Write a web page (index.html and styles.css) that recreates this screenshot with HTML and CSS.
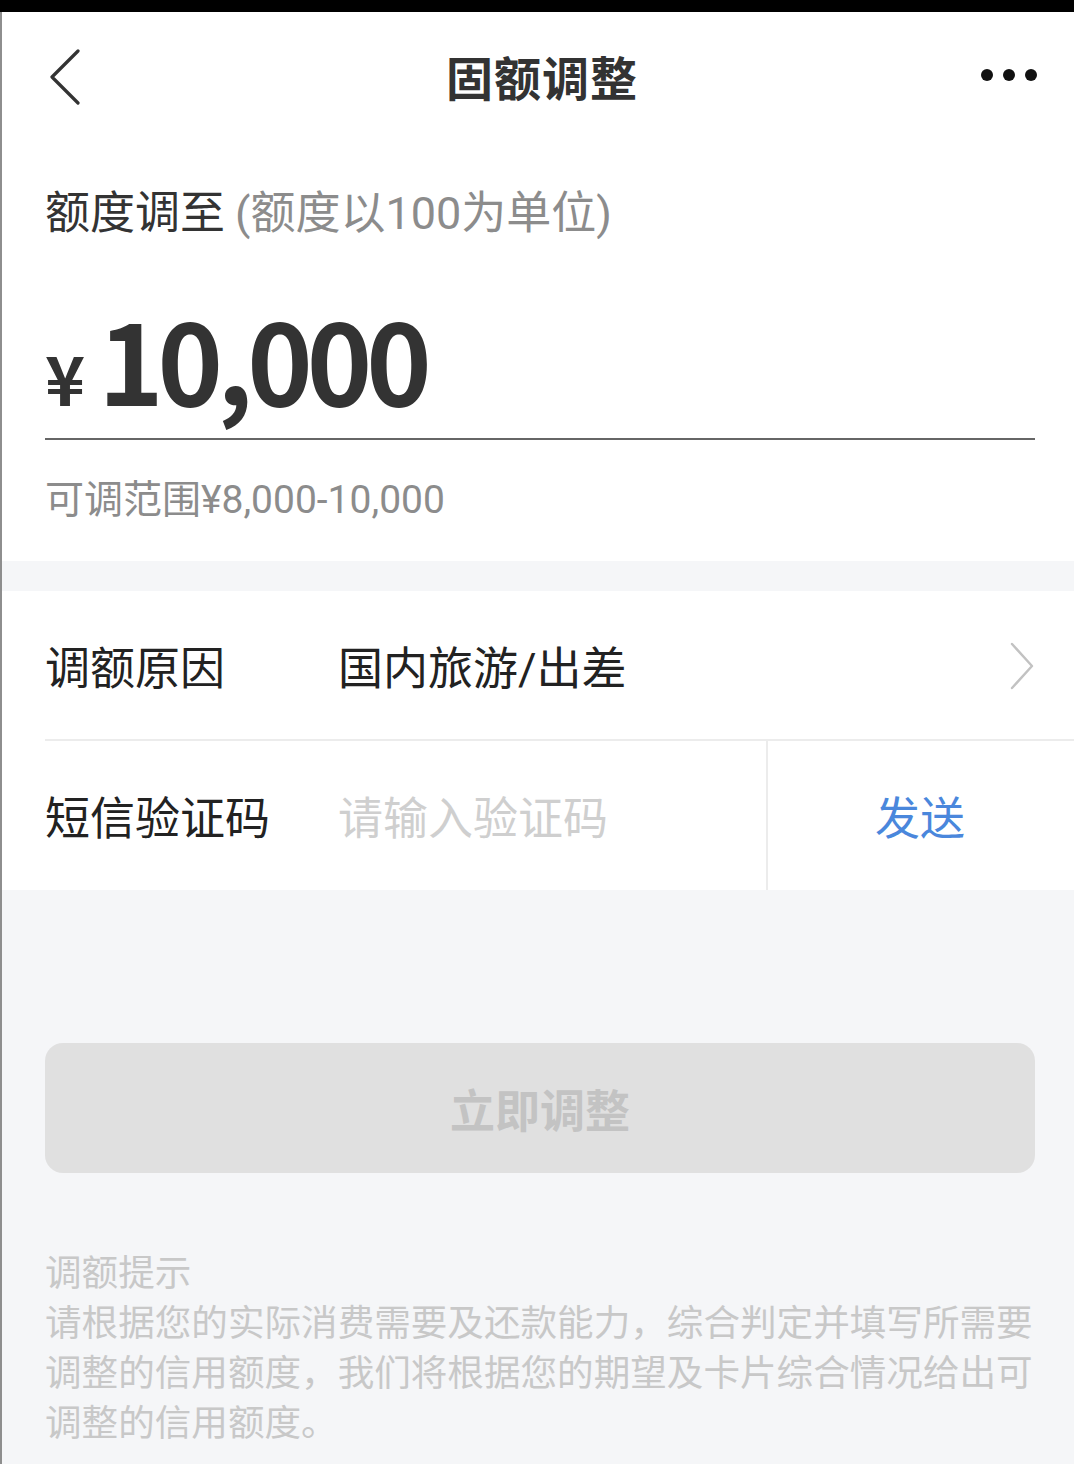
FILE: index.html
```html
<!DOCTYPE html>
<html lang="zh-CN">
<head>
    <meta charset="UTF-8">
    <meta name="viewport" content="width=device-width, initial-scale=1.0">
    <title>固额调整</title>
    <link rel="stylesheet" href="styles.css">
</head>
<body>
    <div class="status-bar"></div>

    <div class="page">
        <header class="nav">
            <a href="#" class="nav-back">
                <svg width="36" height="56" viewBox="0 0 36 56"><path d="M32 2 L6 28 L32 54" fill="none" stroke="#333" stroke-width="3.2" stroke-linecap="round" stroke-linejoin="round"/></svg>
            </a>
            <h1 class="nav-title">固额调整</h1>
            <a href="#" class="nav-more">
                <svg width="58" height="14" viewBox="0 0 58 14"><circle cx="7" cy="7" r="6" fill="#111"/><circle cx="29" cy="7" r="6" fill="#111"/><circle cx="51" cy="7" r="6" fill="#111"/></svg>
            </a>
        </header>

        <section class="amount-card">
            <div class="amount-label">额度调至 <span class="hint">(额度以100为单位)</span></div>
            <div class="amount-row">
                <span class="currency">¥</span>
                <span class="amount-value">10,000</span>
            </div>
            <div class="amount-range">可调范围¥8,000-10,000</div>
        </section>

        <section class="form-list">
            <div class="form-row">
                <label class="form-label">调额原因</label>
                <div class="form-value">国内旅游/出差</div>
                <svg class="arrow" width="26" height="48" viewBox="0 0 26 48"><path d="M3 2 L23 24 L3 46" fill="none" stroke="#c2c2c2" stroke-width="2.4" stroke-linecap="round" stroke-linejoin="round"/></svg>
            </div>
            <div class="form-row code-row">
                <label class="form-label">短信验证码</label>
                <input class="code-input" type="text" placeholder="请输入验证码">
                <button class="send-btn">发送</button>
            </div>
        </section>

        <div class="actions">
            <button class="btn-submit" disabled>立即调整</button>
        </div>

        <div class="tips">
            <p class="tips-title">调额提示</p>
            <p>请根据您的实际消费需要及还款能力，综合判定并填写所需要调整的信用额度，我们将根据您的期望及卡片综合情况给出可调整的信用额度。</p>
        </div>
    </div>
</body>
</html>
```

FILE: styles.css
```css
:root {
    --text-color: #333;
    --muted-color: #8c8c8c;
    --light-color: #c8c8c8;
    --page-bg: #f5f6f8;
    --line-color: #ececec;
    --blue: #4a87dc;
}

* {
    margin: 0;
    padding: 0;
    box-sizing: border-box;
    font-family: Roboto, 'Noto Sans CJK SC', sans-serif;
}

body {
    background-color: var(--page-bg);
    color: var(--text-color);
    width: 1074px;
    min-height: 1464px;
}

.status-bar {
    height: 12px;
    background-color: #000;
}

.page {
    border-left: 2px solid #8e8e8e;
    min-height: 1452px;
}

/* nav */
.nav {
    height: 128px;
    display: flex;
    align-items: center;
    justify-content: space-between;
    padding: 0 36px 0 44px;
    background-color: #fff;
}

.nav-back,
.nav-more {
    display: flex;
    width: 60px;
}

.nav-back svg {
    margin-top: 2px;
}

.nav-more {
    justify-content: flex-end;
    margin-top: -2px;
}

.nav-title {
    font-family: 'Noto Sans CJK SC', sans-serif;
    font-size: 47px;
    font-weight: 700;
    color: #333;
    letter-spacing: 1px;
    margin-top: -2px;
}

/* amount */
.amount-card {
    background-color: #fff;
    padding: 40px 39px 35px 43px;
}

.amount-label {
    font-family: 'Noto Sans CJK SC', sans-serif;
    font-size: 45px;
    line-height: 60px;
    color: #333;
}

.amount-label .hint {
    color: var(--muted-color);
}

.amount-row {
    display: flex;
    align-items: baseline;
    gap: 13px;
    margin-top: 58px;
    padding-bottom: 25px;
    border-bottom: 2px solid #666;
}

.currency {
    font-family: 'Noto Sans CJK SC', sans-serif;
    font-size: 68px;
    font-weight: 700;
    line-height: 1;
}

.amount-value {
    font-family: 'Noto Sans CJK SC', sans-serif;
    font-size: 111px;
    font-weight: 700;
    line-height: 1;
    letter-spacing: -6px;
}

.amount-range {
    margin-top: 34px;
    font-size: 39px;
    line-height: 52px;
    color: var(--muted-color);
}

/* form */
.form-list {
    margin-top: 30px;
    background-color: #fff;
    padding-left: 43px;
}

.form-row {
    display: flex;
    align-items: center;
    height: 150px;
    font-family: 'Noto Sans CJK SC', sans-serif;
    font-size: 45px;
}

.form-row:first-child {
    border-bottom: 2px solid var(--line-color);
    padding-right: 39px;
}

.form-label {
    width: 293px;
    flex-shrink: 0;
    color: #222;
}

.form-value {
    flex: 1;
    color: #222;
}

.arrow {
    margin-top: 2px;
}

.code-row {
    height: 149px;
}

.code-input {
    flex: 1;
    min-width: 0;
    height: 100%;
    border: none;
    outline: none;
    font-family: 'Noto Sans CJK SC', sans-serif;
    font-size: 45px;
    color: #222;
    background: transparent;
}

.code-input::placeholder {
    color: #cfcfcf;
}

.send-btn {
    width: 308px;
    flex-shrink: 0;
    height: 100%;
    border: none;
    border-left: 2px solid var(--line-color);
    background: transparent;
    font-family: 'Noto Sans CJK SC', sans-serif;
    font-size: 45px;
    color: var(--blue);
    padding-right: 2px;
    cursor: pointer;
}

/* button */
.actions {
    padding: 153px 39px 0 43px;
}

.btn-submit {
    width: 100%;
    height: 130px;
    border: none;
    border-radius: 18px;
    background-color: #e0e0e0;
    font-family: 'Noto Sans CJK SC', sans-serif;
    font-size: 45px;
    font-weight: 700;
    color: #c3c3c3;
}

/* tips */
.tips {
    padding: 76px 36px 0 43px;
    font-family: 'Noto Sans CJK SC', sans-serif;
    font-size: 36.6px;
    line-height: 50px;
    color: var(--light-color);
}
```
